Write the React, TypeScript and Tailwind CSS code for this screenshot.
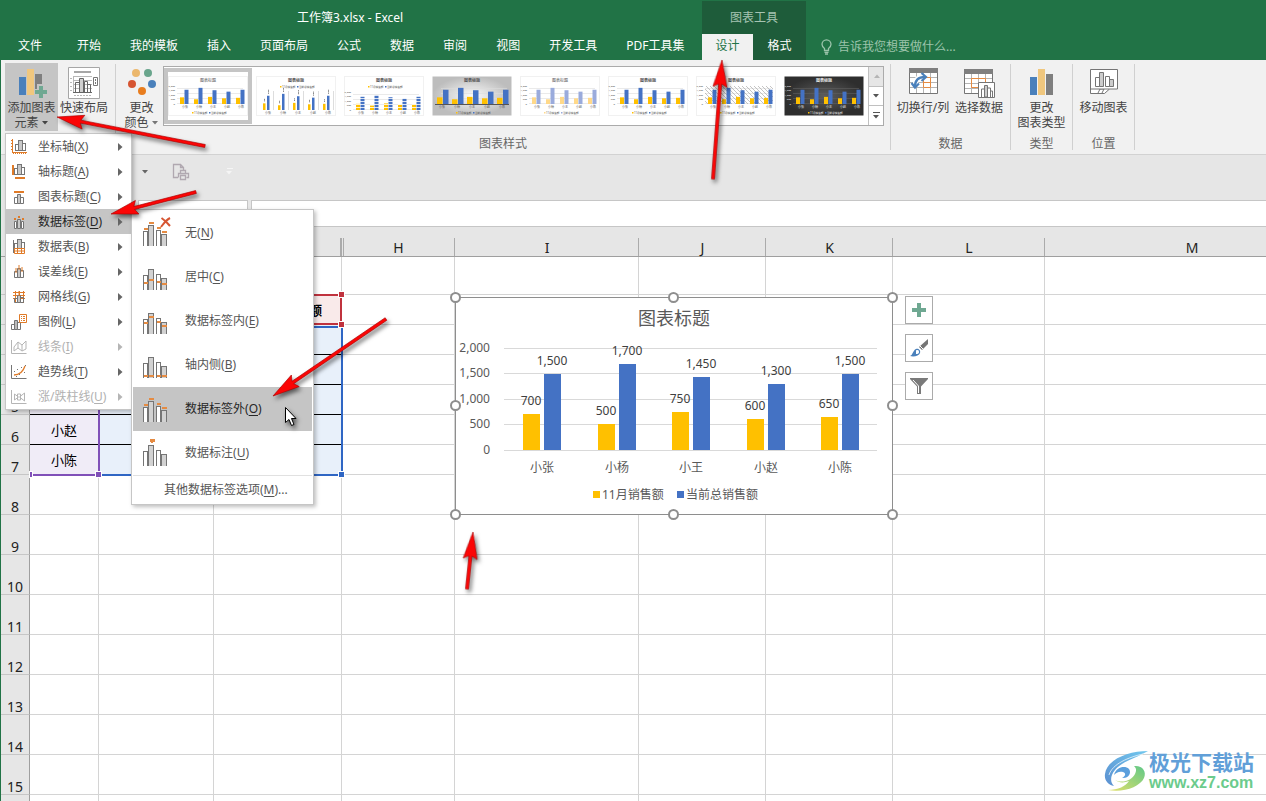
import React from 'react';
import { clsx } from 'clsx';

interface MenuEntry {
  label: string;
  hotkey: string;
  icon: React.ReactNode;
  disabled?: boolean;
  active?: boolean;
}

const TABS = ['开始', '我的模板', '插入', '页面布局', '公式', '数据', '审阅', '视图', '开发工具', 'PDF工具集'];

const SALES = [
  { name: '小张', nov: 700, total: 1500 },
  { name: '小杨', nov: 500, total: 1700 },
  { name: '小王', nov: 750, total: 1450 },
  { name: '小赵', nov: 600, total: 1300 },
  { name: '小陈', nov: 650, total: 1500 },
];

const ORANGE = '#e07b28';
const GRAY = '#757575';

/* ---------- Icons ---------- */

function Bars({ color = GRAY }: { color?: string }) {
  return (
    <g stroke={color} fill="#fff" shapeRendering="crispEdges">
      <path d="M4.5 13.5v-6h3v6z" />
      <path d="M11.5 13.5v-7h3v7z" />
      <path d="M7.5 13.5v-10h4v10z" fill="#c8c8c8" />
    </g>
  );
}

function SmallIcon({ children }: { children: React.ReactNode }) {
  return (
    <svg width="16" height="16" viewBox="0 0 16 16" fill="none" className="shrink-0">
      {children}
    </svg>
  );
}

const AxisIcon = (
  <SmallIcon>
    <g transform="translate(0 -2)"><Bars /></g>
    <path d="M1.5 0v14M0 1.500h1M0 4.500h1M0 7.500h1M0 10.500h1" stroke={ORANGE} />
    <path d="M1 13.500h15" stroke={ORANGE} />
    <path d="M2 14.500h14" stroke={ORANGE} strokeDasharray="1 1" />
  </SmallIcon>
);
const AxisTitleIcon = (
  <SmallIcon>
    <g transform="translate(-1 -3)"><Bars /></g>
    <path d="M1 1h2v10H1zM4 13h10v2H4z" fill={ORANGE} />
  </SmallIcon>
);
const TitleIcon = (
  <SmallIcon>
    <path d="M3.500 14.500v-6h3v6zM9.500 14.500v-6h3v6z" fill="#fff" stroke={GRAY} />
    <path d="M6.500 14.500v-9h3v9z" fill="#c8c8c8" stroke={GRAY} />
    <path d="M3 2h10v2H3z" fill={ORANGE} />
  </SmallIcon>
);
const LabelIcon = (
  <SmallIcon>
    <path d="M3.500 14.500v-7h2v7zM10.500 14.500v-7h2v7z" fill="#fff" stroke={GRAY} />
    <path d="M6.500 14.500v-9h3v9z" fill="#c8c8c8" stroke={GRAY} />
    <path d="M3 4h2v2H3zM7 2h2v2H7zM11 4h2v2h-2z" fill={ORANGE} />
  </SmallIcon>
);
const TableIcon = (
  <SmallIcon>
    <g transform="translate(-1 -3)"><Bars /></g>
    <path d="M3.500 9.500h10v5h-10zM3 12h11M6.500 9v6M10.500 9v6" stroke={ORANGE} fill="#fff" />
    <path d="M2.500 1v13" stroke={GRAY} />
  </SmallIcon>
);
const ErrorIcon = (
  <SmallIcon>
    <path d="M3.500 13.500v-6h3v6zM9.500 13.500v-7h3v7z" fill="#fff" stroke={GRAY} />
    <path d="M6.500 13.500v-9h3v9z" fill="#c8c8c8" stroke={GRAY} />
    <path d="M8 1v5M5 4v5M11 3v5" stroke={ORANGE} />
  </SmallIcon>
);
const GridIcon = (
  <SmallIcon>
    <path d="M2 3.500h12M2 6.500h12M2 9.500h12M4.500 2v12M8.500 2v12M12.500 2v12" stroke={ORANGE} />
    <path d="M3.500 13.500v-4h3v4zM9.500 13.500v-5h3v5z" stroke={GRAY} />
    <path d="M6.500 13.500v-7h3v7z" fill="#c8c8c8" stroke={GRAY} />
    <path d="M8 2v5" stroke={ORANGE} />
  </SmallIcon>
);
const LegendIcon = (
  <SmallIcon>
    <path d="M.5 15.5v-5h3v5zM6.5 15.5v-7h3v7z" fill="#fff" stroke={GRAY} />
    <path d="M3.5 15.5v-9h3v9z" fill="#bbb" stroke={GRAY} />
    <path d="M8.5.5h7v8h-7z" fill="#fff" stroke={ORANGE} />
    <path d="M10 2.5h1m1 0h2M10 4.5h1m1 0h2M10 6.5h1m1 0h2" stroke={ORANGE} />
  </SmallIcon>
);
const LinesIcon = (
  <SmallIcon>
    <path d="M.5 1v13.500h15" stroke="#b5b5b5" />
    <path d="M3 11V8l4-5 4 3 4-4v8l-4 2-4-3-4 3zM7 3v6M11 6v6" stroke="#b5b5b5" />
  </SmallIcon>
);
const TrendIcon = (
  <SmallIcon>
    <path d="M.5 1v13.500h15" stroke={GRAY} />
    <path d="M3 11c6 0 9-3 11-9" stroke={ORANGE} strokeWidth="1.300" />
    <path d="M3 7h1v1H3zM6 5h1v1H6zM8 10h1v1H8zM10 3h1v1h-1zM13 8h1v1h-1zM5 12h1v1H5zM14 1h1v1h-1z" fill={GRAY} />
  </SmallIcon>
);
const UpDownIcon = (
  <SmallIcon>
    <path d="M.5 1v13.500h15" stroke="#b5b5b5" />
    <path d="M3.500 5v6l4-3zM13.500 4v8l-5-4zM6.500 5h3v6h-3z" stroke="#b5b5b5" />
  </SmallIcon>
);

type LabelMode = 'none' | 'center' | 'inside' | 'base' | 'outside' | 'callout';

const ICON_BARS = [
  { x: 0.5, w: 4, top: 11.5, fill: '#fff' },
  { x: 5.5, w: 5, top: 5.5, fill: '#d2d2d2' },
  { x: 13.5, w: 4, top: 10.5, fill: '#fff' },
  { x: 18.5, w: 5, top: 14.5, fill: '#d2d2d2' },
];

function PositionIcon({ mode }: { mode: LabelMode }) {
  return (
    <svg width="28" height="32" viewBox="0 -3 28 32" fill="none" className="shrink-0" shapeRendering="crispEdges">
      {ICON_BARS.map((b) => {
        let y = b.top - 3.5;
        if (mode === 'center') y = (b.top + 26) / 2 - 1;
        if (mode === 'inside') y = b.top + 2;
        if (mode === 'base') y = 23;
        return (
          <g key={b.x}>
            <path d={`M${b.x} 26V${b.top}h${b.w}V26`} fill={b.fill} stroke={GRAY} />
            {mode !== 'callout' && (
              <rect x={b.x} y={Math.round(y)} width={b.w} height="2" fill="#e58b42" />
            )}
          </g>
        );
      })}
      {mode === 'callout' && <path d="M7-1h5v3h-2l-1 2-1-2H7z" fill="#e58b42" />}
      {mode === 'none' && (
        <path d="M18.500-2c3 2 6 5 8.500 8M27-2c-4 2-6 5-9 9" stroke="#d65532" strokeWidth="2" shapeRendering="auto" />
      )}
    </svg>
  );
}

function AddElementIcon() {
  return (
    <svg width="32" height="32" viewBox="0 0 32 32">
      <path d="M3 10h7v18H3z" fill="#4a80bb" />
      <path d="M11 2h7v26h-7z" fill="#f0c77e" />
      <path d="M19 7h7v21h-7z" fill="#7f7f7f" />
      <path d="M21 17h8v5h3v7h-3v3h-8v-3h-3v-7h3z" fill="#c5c5c5" />
      <path d="M23 19h4v4h4v4h-4v4h-4v-4h-4v-4h4z" fill="#6fa892" />
    </svg>
  );
}

function QuickLayoutIcon() {
  return (
    <svg width="32" height="32" viewBox="0 0 32 32" fill="none">
      <path d="M.5.500h31v31H.5z" fill="#fff" stroke="#a6a6a6" />
      <path d="M6 4h17v2H6z" fill="#a6a6a6" />
      <path d="M5 9.500h19M5 13.500h19M5 17.500h19M5 21.500h19M5.500 9v16M2 11.500h2M2 15.500h2M2 19.500h2M2 23.500h2" stroke="#b8b8b8" />
      <path d="M12 12h3v13h-3z" fill="#d0d0d0" />
      <path d="M7.500 25V15.500h4V25M11.500 25V11.500h4V25M16.500 25V14.500h3V25M19.500 25V17.500h3V25M5 25.500h19" stroke="#666" />
      <path d="M25.500 10.500h4v8h-4z" stroke="#777" />
      <path d="M27 12h1v2h-1zM27 15h1v2h-1z" fill="#777" />
      <path d="M6 28.500h18" stroke="#b8b8b8" strokeDasharray="2 1" />
    </svg>
  );
}

function ColorsIcon() {
  return (
    <svg width="32" height="32" viewBox="0 0 32 32">
      <circle cx="10" cy="6" r="4" fill="#ebb76c" />
      <circle cx="22" cy="6" r="4" fill="#69a58c" />
      <circle cx="6" cy="17" r="4" fill="#d65532" />
      <circle cx="26" cy="17" r="4" fill="#4a80bb" />
      <circle cx="16" cy="24" r="4" fill="#e87d1e" />
    </svg>
  );
}

function SwitchIcon() {
  return (
    <svg width="32" height="32" viewBox="0 0 32 32" fill="none">
      <path d="M2.500 3.500h28v23h-28z" fill="#fff" stroke={GRAY} />
      <path d="M2 1h29v5H2z" fill="#7f7f7f" />
      <path d="M3 10.500h27M3 15.500h27M3 20.500h27M9.500 6v20M16.500 6v20M23.500 6v20" stroke="#b4b4b4" />
      <path d="M16.500 10.500h7v10h-7zM17 15.500h6" stroke="#e58b42" fill="#fff" />
      <path d="M8 19c0-6 3-9 9-9" stroke="#fff" strokeWidth="5" />
      <path d="M8 20c0-7 3-10 10-10" stroke="#4a80bb" strokeWidth="2.500" />
      <path d="M14.500 6l4.500 4-4.500 4M4.500 16l3.500 4.500 4-4" stroke="#4a80bb" strokeWidth="2.200" />
    </svg>
  );
}

function SelectDataIcon() {
  return (
    <svg width="32" height="32" viewBox="0 0 32 32" fill="none">
      <path d="M1.500 3.500h28v23h-28z" fill="#fff" stroke={GRAY} />
      <path d="M1 2h29v5H1z" fill="#7f7f7f" />
      <path d="M2 11.500h27M2 16.500h27M2 21.500h27M8.500 7v19M15.500 7v19M22.500 7v19" stroke="#b4b4b4" />
      <path d="M8.500 11.500h14v9h-14z" stroke="#e58b42" />
      <path d="M15.500 15.500h16v15h-16z" fill="#fff" stroke={GRAY} />
      <path d="M18.500 30v-8h3v8M24.500 30v-9h3v9M27.500 30v-6h2v6" stroke={GRAY} />
      <path d="M21.500 30V18.500h3V30z" stroke={GRAY} fill="#ccc" />
    </svg>
  );
}

function ChangeTypeIcon() {
  return (
    <svg width="32" height="32" viewBox="0 0 32 32">
      <path d="M4 10h7v18H4z" fill="#4a80bb" />
      <path d="M12 2h7v26h-7z" fill="#f0c77e" />
      <path d="M20 7h7v21h-7z" fill="#7f7f7f" />
    </svg>
  );
}

function MoveChartIcon() {
  return (
    <svg width="32" height="32" viewBox="0 0 32 32" fill="none">
      <path d="M2.500 22v4.500h14l5-4.500" fill="#fff" stroke={GRAY} />
      <path d="M10 26l2-4h4l-2 4" stroke={GRAY} />
      <path d="M2.500 2.500h27v19.500h-27z" fill="#fff" stroke={GRAY} />
      <path d="M7.500 19.500v-9h4v9zM17.500 19.500v-10h4v10z" stroke={GRAY} />
      <path d="M11.500 19.500v-14h4v14zM21.500 19.500v-7h4v7z" fill="#ccc" stroke={GRAY} />
    </svg>
  );
}

function Caret({ className }: { className?: string }) {
  return (
    <svg width="7" height="4" viewBox="0 0 7 4" className={clsx('inline-block', className)}>
      <path d="M0 0h6L3 3.500z" fill="currentColor" />
    </svg>
  );
}

/* ---------- Ribbon ---------- */

type ThumbKind = 'plain' | 'labels' | 'stripes' | 'gradient' | 'soft' | 'bold' | 'hatch' | 'dark';

function ChartThumb({ kind }: { kind: ThumbKind }) {
  const legendTop = kind === 'labels' || kind === 'stripes';
  const yellow = kind === 'soft' ? '#ffd98a' : '#ffc000';
  const blue = kind === 'soft' ? '#9aabdc' : '#4472c4';
  const text = kind === 'dark' ? '#e8e8e8' : '#555';
  const thin = kind === 'labels';
  const base = legendTop ? 34 : 28;
  const scale = kind === 'stripes' ? 0.0088 : 0.0095;
  const grid = kind === 'dark' ? '#606060' : '#dcdcdc';
  return (
    <svg width="80" height="40" viewBox="0 0 80 40">
      <defs>
        <radialGradient id="thumb-light">
          <stop offset="0" stopColor="#fafafa" />
          <stop offset="1" stopColor="#bdbdbd" />
        </radialGradient>
        <radialGradient id="thumb-dark">
          <stop offset="0" stopColor="#5c5c5c" />
          <stop offset="1" stopColor="#2e2e2e" />
        </radialGradient>
        <pattern id="thumb-hatch" width="4" height="4" patternUnits="userSpaceOnUse">
          <path d="M0 0l4 4" stroke="#aaa" strokeWidth=".7" />
        </pattern>
      </defs>
      <rect
        x=".5"
        y=".5"
        width="79"
        height="39"
        fill={kind === 'gradient' ? 'url(#thumb-light)' : kind === 'dark' ? 'url(#thumb-dark)' : '#fff'}
        stroke={kind === 'dark' || kind === 'gradient' ? 'none' : '#f1f1f1'}
      />
      {!thin && [0, 5, 10, 15].map((d) => (
        <path key={d} d={`M9 ${base - d - 0.5}h66`} stroke={grid} strokeWidth=".6" />
      ))}
      {kind === 'gradient' && <path d="M3 28.500h74" stroke="#555" />}
      {kind === 'hatch' && <rect x="9" y="10" width="68" height="18" fill="url(#thumb-hatch)" />}
      {!thin && kind !== 'gradient' && ['0', '500', '1,000', '1,500', '2,000'].map((t, i) => (
        <text key={t} x="7" y={base - i * 4.5 + 0.5} fontSize="2.500" textAnchor="end" fill={text}>{t}</text>
      ))}
      {SALES.map((s, i) => {
        const x = thin ? 7 + i * 15 : kind === 'gradient' ? 5 + i * 15 : 12 + i * 14;
        const w = thin ? 2.5 : kind === 'gradient' ? 5.5 : 4;
        const novH = s.nov * scale;
        const totalH = s.total * scale;
        return (
          <g key={s.name}>
            {thin && <path d={`M${x + 10.5} 15v19`} stroke="#ddd" />}
            <rect x={x} y={base - novH} width={w} height={novH} fill={yellow} />
            <rect x={x + (thin ? 4 : kind === 'gradient' ? 6 : 4.5)} y={base - totalH} width={w} height={totalH} fill={blue} />
            {kind === 'stripes' && [2, 5, 8, 11, 14].map((d) => (
              <path key={d} d={`M${x} ${base - d - 0.5}h9`} stroke="#fff" strokeWidth=".8" />
            ))}
            {thin && (
              <g stroke="#777" strokeDasharray="1 .5">
                <path d={`M${x + 1.5} ${base - novH - 2}v-3M${x + 5.5} ${base - totalH - 2}v-4`} />
              </g>
            )}
            <text x={x + 5} y={base + 4} fontSize="3" textAnchor="middle" fill={text}>{s.name}</text>
          </g>
        );
      })}
      <text x="40" y="6" fontSize="4" fontWeight={kind === 'plain' || kind === 'soft' ? 400 : 700} textAnchor="middle" fill={text}>图表标题</text>
      <g fontSize="2.600" fill={text}>
        <rect x="24" y={legendTop ? 10 : 36} width="1.500" height="1.500" fill={yellow} />
        <text x="26" y={legendTop ? 12 : 38}>11月销售额</text>
        <rect x="41" y={legendTop ? 10 : 36} width="1.500" height="1.500" fill={blue} />
        <text x="43" y={legendTop ? 12 : 38}>当前总销售额</text>
      </g>
    </svg>
  );
}

const THUMBS: ThumbKind[] = ['plain', 'labels', 'stripes', 'gradient', 'soft', 'bold', 'hatch', 'dark'];

interface RibbonButtonProps {
  icon: React.ReactNode;
  children: React.ReactNode;
  className: string;
}

function RibbonButton({ icon, children, className }: RibbonButtonProps) {
  return (
    <button className={clsx('flex h-[68px] flex-col items-center gap-px whitespace-nowrap pt-1 text-xs leading-[15px] text-[#444]', className)}>
      {icon}
      <span className="block text-center">{children}</span>
    </button>
  );
}

function RibbonGroup({ label, children }: { label: string; children: React.ReactNode }) {
  return (
    <div className="flex shrink-0">
      <div className="flex flex-col pt-[3px]">
        <div className="flex h-[74px]">{children}</div>
        <div className="text-center text-xs leading-[14px] text-[#666]">{label}</div>
      </div>
      <div className="mt-1 h-[86px] w-px bg-[#d0d0d0]" />
    </div>
  );
}

function Ribbon() {
  return (
    <div className="flex h-[95px] shrink-0 border-b border-[#d2d2d2] bg-[#f1f1f1]">
      <div className="relative z-20">
        <RibbonGroup label="">
          <RibbonButton className="ml-1 w-[53px] bg-[#c5c5c5]" icon={<AddElementIcon />}>
            添加图表<br />元素 <Caret className="mb-0.5" />
          </RibbonButton>
          <RibbonButton className="mr-[5px] w-[52px]" icon={<QuickLayoutIcon />}>快速布局</RibbonButton>
        </RibbonGroup>
        <ElementMenu />
      </div>

      <RibbonGroup label="图表样式">
        <RibbonButton className="ml-1 w-[43px]" icon={<ColorsIcon />}>
          更改<br />颜色 <Caret className="mb-0.5 text-[#777]" />
        </RibbonButton>
        <div className="mr-1.5 mt-[3px] flex h-[60px] border border-[#ababab] bg-white">
          {THUMBS.map((kind, i) => (
            <button
              key={kind}
              aria-label={`样式 ${i + 1}`}
              className={clsx('my-px flex w-[88px] items-center justify-center border-4', i === 0 ? 'border-[#c5c5c5]' : 'border-transparent')}
            >
              <ChartThumb kind={kind} />
            </button>
          ))}
          <div className="flex w-[15px] flex-col border-l border-[#c0c0c0] text-[#555]">
            <button aria-label="上一行" className="flex flex-1 items-center justify-center bg-[#e6e6e6] text-[#b5b5b5]">
              <Caret className="rotate-180" />
            </button>
            <button aria-label="下一行" className="flex flex-1 items-center justify-center border-y border-[#c0c0c0]">
              <Caret />
            </button>
            <button aria-label="其他" className="flex flex-1 flex-col items-center justify-center gap-0.5">
              <span className="h-px w-[7px] bg-[#555]" />
              <Caret />
            </button>
          </div>
        </div>
      </RibbonGroup>

      <RibbonGroup label="数据">
        <RibbonButton className="ml-1 w-14" icon={<SwitchIcon />}>切换行/列</RibbonButton>
        <RibbonButton className="mr-[3px] w-14" icon={<SelectDataIcon />}>选择数据</RibbonButton>
      </RibbonGroup>
      <RibbonGroup label="类型">
        <RibbonButton className="w-[61px]" icon={<ChangeTypeIcon />}>更改<br />图表类型</RibbonButton>
      </RibbonGroup>
      <RibbonGroup label="位置">
        <RibbonButton className="w-[61px]" icon={<MoveChartIcon />}>移动图表</RibbonButton>
      </RibbonGroup>
    </div>
  );
}

/* ---------- Menus ---------- */

const ELEMENTS: MenuEntry[] = [
  { label: '坐标轴', hotkey: 'X', icon: AxisIcon },
  { label: '轴标题', hotkey: 'A', icon: AxisTitleIcon },
  { label: '图表标题', hotkey: 'C', icon: TitleIcon },
  { label: '数据标签', hotkey: 'D', icon: LabelIcon, active: true },
  { label: '数据表', hotkey: 'B', icon: TableIcon },
  { label: '误差线', hotkey: 'E', icon: ErrorIcon },
  { label: '网格线', hotkey: 'G', icon: GridIcon },
  { label: '图例', hotkey: 'L', icon: LegendIcon },
  { label: '线条', hotkey: 'I', icon: LinesIcon, disabled: true },
  { label: '趋势线', hotkey: 'T', icon: TrendIcon },
  { label: '涨/跌柱线', hotkey: 'U', icon: UpDownIcon, disabled: true },
];

const POSITIONS: MenuEntry[] = [
  { label: '无', hotkey: 'N', icon: <PositionIcon mode="none" /> },
  { label: '居中', hotkey: 'C', icon: <PositionIcon mode="center" /> },
  { label: '数据标签内', hotkey: 'E', icon: <PositionIcon mode="inside" /> },
  { label: '轴内侧', hotkey: 'B', icon: <PositionIcon mode="base" /> },
  { label: '数据标签外', hotkey: 'O', icon: <PositionIcon mode="outside" />, active: true },
  { label: '数据标注', hotkey: 'U', icon: <PositionIcon mode="callout" /> },
];

function Hotkey({ entry }: { entry: Pick<MenuEntry, 'label' | 'hotkey'> }) {
  return (
    <span>
      {entry.label}(<span className="underline underline-offset-2">{entry.hotkey}</span>)
    </span>
  );
}

function ElementMenu() {
  return (
    <div className="absolute left-1 top-[73px] w-[127px] border border-[#c6c6c6] bg-white shadow-[2px_2px_4px_rgba(0,0,0,0.25)]">
      {ELEMENTS.map((e) => (
        <button
          key={e.label}
          disabled={e.disabled}
          className={clsx(
            'flex h-[25px] w-full items-center gap-[11px] pl-[5px] text-xs',
            e.active ? 'bg-[#c5c5c5] text-[#262626]' : e.disabled ? 'text-[#b1b1b1]' : 'text-[#555]',
          )}
        >
          {e.icon}
          <Hotkey entry={e} />
          <svg width="5" height="8" viewBox="0 0 5 8" className="ml-auto mr-2 shrink-0">
            <path d="M0 0v8l4.500-4z" fill={e.disabled ? '#b5b5b5' : '#666'} />
          </svg>
        </button>
      ))}
      <PositionMenu />
    </div>
  );
}

function PositionMenu() {
  return (
    <div className="absolute left-[125px] top-[75px] w-[183px] border border-[#c6c6c6] bg-white p-px shadow-[2px_2px_4px_rgba(0,0,0,0.25)]">
      {POSITIONS.map((p) => (
        <button
          key={p.label}
          className={clsx(
            'flex h-11 w-full items-center gap-3.5 pl-2.5 text-xs',
            p.active ? 'bg-[#c5c5c5] text-[#262626]' : 'text-[#555]',
          )}
        >
          {p.icon}
          <Hotkey entry={p} />
        </button>
      ))}
      <button className="flex h-7 w-full items-center border-t border-[#e1e1e1] pl-[31px] text-xs text-[#555]">
        其他数据标签选项(<span className="underline underline-offset-2">M</span>)...
      </button>
    </div>
  );
}

/* ---------- Header ---------- */

function Header() {
  return (
    <header className="flex h-[60px] shrink-0 bg-[#217346] text-xs text-white">
      <div className="flex w-[701px] shrink-0 flex-col">
        <div className="flex h-[34px] items-center pl-[296px] pt-0.5">工作簿3.xlsx - Excel</div>
        <nav className="flex flex-1 items-center gap-[29px] whitespace-nowrap pb-0.5 pl-[17px]">
          <button className="mr-1.5">文件</button>
          {TABS.map((t) => (
            <button key={t}>{t}</button>
          ))}
        </nav>
      </div>
      <div className="mt-px flex w-[104px] shrink-0 flex-col bg-[#1e5c3a]">
        <div className="flex h-[33px] items-center justify-center text-[#a6c4b2]">图表工具</div>
        <div className="flex flex-1">
          <button className="w-[51px] bg-[#f1f1f1] pb-0.5 text-[#217346]">设计</button>
          <button className="flex-1 pb-0.5">格式</button>
        </div>
      </div>
      <div className="flex items-end gap-1.5 pb-[3px] pl-[15px] text-[#9cc4ab]">
        <svg width="11" height="16" viewBox="0 0 11 16" fill="none" stroke="currentColor" strokeWidth="1.300" className="mb-0.5">
          <path d="M3.500 11.500V9.500C2 8.500 1 7 1 5.300a4.500 4.500 0 0 1 9 0c0 1.700-1 3.200-2.500 4.200v2zM3.500 13.300h4M4 15h3" />
        </svg>
        <span className="leading-5">告诉我您想要做什么...</span>
      </div>
    </header>
  );
}

function Toolbars() {
  return (
    <div className="shrink-0 bg-[#e6e6e6]">
      <div className="flex h-[45px] items-center pb-3 pl-[141px] text-[#666]">
        <Caret />
        <svg width="18" height="18" viewBox="0 0 18 18" fill="none" stroke="#b0a8b0" className="ml-[23px]">
          <path d="M6 14.500H1.500V1.500h7l3 3V7M8.500 1.500v3h3" strokeWidth="1.300" />
          <path d="M8.500 10V7.500h5V10M6.500 14.500v-4h10v4h-2M8.500 12.500h5v4h-5z" strokeWidth="1.300" />
        </svg>
        <div className="ml-9 flex flex-col items-center gap-0.5 text-[#f5f5f5]">
          <span className="h-px w-1.5 bg-[#f5f5f5]" />
          <Caret />
        </div>
      </div>
      <div className="flex h-7 gap-[3px] pb-px pl-[137px]">
        <input aria-label="名称框" className="w-[110px] border border-[#c6c6c6] bg-white px-2 text-xs outline-none" />
        <input aria-label="编辑栏" className="min-w-0 flex-1 border border-r-0 border-[#c6c6c6] bg-white px-2 text-xs outline-none" />
      </div>
    </div>
  );
}

/* ---------- Sheet ---------- */

const COLUMNS = ['', '', '', 'H', 'I', 'J', 'K', 'L', 'M'];

// text of the used cells, by row, from the first column on
const CELLS: Record<number, string[]> = {
  2: ['', '', '当前总销售额'],
  6: ['小赵'],
  7: ['小陈'],
};

function rowHeight(row: number) {
  if (row === 1) return 'h-[38px]';
  return row <= 7 ? 'h-[30px]' : 'h-10';
}

function cellClass(row: number, col: number) {
  const inData = row >= 3 && row <= 7 && col < 3;
  return clsx(
    'border-b border-r p-0 text-center',
    inData && row < 7 ? 'border-b-black border-r-[#d4d4d4]' : 'border-[#d4d4d4]',
    inData && (col === 0 ? 'bg-[#f0ecf7]' : 'bg-[#e8f0fa]'),
    row === 2 && (col === 1 || col === 2) && 'bg-[#f9eaea]',
    row === 2 && col === 2 && 'pr-[19px] text-right font-bold',
  );
}

function Grid() {
  return (
    <table className="w-[1338px] table-fixed border-separate border-spacing-0 text-[13px] leading-4 text-black">
      <colgroup>
        <col className="w-[29px]" />
        <col className="w-[69px]" />
        <col className="w-[115px]" />
        <col className="w-32" />
        <col className="w-[113px]" />
        <col className="w-[184px]" />
        <col className="w-[127px]" />
        <col className="w-[127px]" />
        <col className="w-[152px]" />
        <col className="w-[294px]" />
      </colgroup>
      <thead>
        <tr className="h-[29px] bg-[#e6e6e6] text-sm">
          <th className="border-b border-[#9f9f9f] p-0" />
          {COLUMNS.map((c, i) => (
            <th
              key={i}
              scope="col"
              className="border-b border-[#9f9f9f] bg-[linear-gradient(#ababab,#ababab)] bg-[length:1px_18px] bg-[position:100%_100%] bg-no-repeat p-0 align-bottom font-normal leading-4 text-[#222]"
            >
              {c}
            </th>
          ))}
        </tr>
      </thead>
      <tbody>
        {Array.from({ length: 15 }, (_, i) => i + 1).map((row) => (
          <tr key={row} className={rowHeight(row)}>
            <th scope="row" className="border-b border-r border-b-[#c6c6c6] border-r-[#9f9f9f] bg-[#e6e6e6] p-0 align-bottom text-sm font-normal leading-[15px] text-[#222]">
              {row}
            </th>
            {COLUMNS.map((_, col) => (
              <td key={col} className={cellClass(row, col)}>{CELLS[row]?.[col]}</td>
            ))}
          </tr>
        ))}
        <tr className="h-10">
          <th className="border-r border-[#9f9f9f] bg-[#e6e6e6]" />
          {COLUMNS.map((_, col) => (
            <td key={col} className="border-r border-[#d4d4d4]" />
          ))}
        </tr>
      </tbody>
    </table>
  );
}

// Coloured frames around the ranges that feed the chart
function RangeFrames() {
  return (
    <svg width="350" height="260" className="pointer-events-none absolute left-0 top-0" shapeRendering="crispEdges" fill="none">
      <path d="M98 67h242v29H98z" stroke="#c0323e" strokeWidth="2" />
      <path d="M98 99h243v148H98" stroke="#2f66c4" strokeWidth="2" />
      <path d="M98 99v148H30" stroke="#8050b8" strokeWidth="2" />
      <path d="M337.500 63.500h6v6h-6zM337.500 93.500h6v6h-6z" fill="#c0323e" stroke="#fff" />
      <path d="M337.500 243.500h6v6h-6z" fill="#2f66c4" stroke="#fff" />
      <path d="M94.500 243.500h6v6h-6zM28.500 243.500h3v6h-3z" fill="#8050b8" stroke="#fff" />
      <path d="M339.500 10v18" stroke="#ababab" />
      <path d="M342.500 10v18" stroke="#ababab" />
    </svg>
  );
}

const PLOT_BOTTOM = 450;
const UNIT = 0.0512;

function Chart() {
  return (
    <svg
      width="452"
      height="232"
      viewBox="448 290 452 232"
      className="block text-xs"
      role="img"
      aria-label="图表标题"
    >
      <path d="M455.500 297.500h437v217h-437z" fill="#fff" stroke="#8e8e8e" />
      <text x="674" y="325" fontSize="18" textAnchor="middle" fill="#595959">图表标题</text>
      {[0, 500, 1000, 1500, 2000].map((v) => {
        const y = Math.round(PLOT_BOTTOM - v * UNIT);
        return (
          <g key={v}>
            <path d={`M504 ${y + 0.5}h373`} stroke="#d9d9d9" />
            <text x="490" y={y + 4} textAnchor="end" fill="#595959">{v.toLocaleString('en-US')}</text>
          </g>
        );
      })}
      {SALES.map((s, i) => {
        const x = Math.round(523 + i * 74.5);
        const novTop = Math.round(PLOT_BOTTOM - s.nov * UNIT);
        const totalTop = Math.round(PLOT_BOTTOM - s.total * UNIT) + 1;
        return (
          <g key={s.name} textAnchor="middle">
            <rect x={x} y={novTop} width="17" height={PLOT_BOTTOM - novTop} fill="#ffc000" />
            <rect x={x + 21} y={totalTop} width="17" height={PLOT_BOTTOM - totalTop} fill="#4472c4" />
            <text x={x + 8} y={novTop - 9} fill="#404040">{s.nov}</text>
            <text x={x + 29} y={totalTop - 9} fill="#404040">{s.total.toLocaleString('en-US')}</text>
            <text x={x + 19} y="472" fill="#595959">{s.name}</text>
          </g>
        );
      })}
      <path d="M593 491h7v7h-7z" fill="#ffc000" />
      <text x="602" y="499" fill="#595959">11月销售额</text>
      <path d="M677 491h7v7h-7z" fill="#4472c4" />
      <text x="686" y="499" fill="#595959">当前总销售额</text>
      {[[455.5, 297.5], [673.5, 297.5], [892.5, 297.5], [455.5, 405.5], [892.5, 405.5], [455.5, 514.5], [673.5, 514.5], [892.5, 514.5]].map(([cx, cy]) => (
        <circle key={`${cx}-${cy}`} cx={cx} cy={cy} r="4.500" fill="#fff" stroke="#8e8e8e" strokeWidth="2" />
      ))}
    </svg>
  );
}

function ChartTools() {
  const box = 'flex size-7 items-center justify-center border border-[#ababab] bg-white';
  return (
    <div className="flex flex-col gap-2.5 pt-1.5">
      <button aria-label="图表元素" className={box}>
        <svg width="16" height="16" viewBox="0 0 16 16">
          <path d="M6 1h4v5h5v4h-5v5H6v-5H1V6h5z" fill="#6fa892" />
        </svg>
      </button>
      <button aria-label="图表样式" className={box}>
        <svg width="20" height="20" viewBox="0 0 20 20">
          <path d="M19 1v5l-6 6-3-3z" fill="#757575" />
          <path d="M11 8l3 3" stroke="#fff" />
          <path d="M1 18c3-1 3-6 6-7 2-1 5 1 4 4-1 3-6 4-10 3z" fill="#4a80bb" />
          <path d="M7 12.500c2-1 3 0 3 1.500s-1 2-3 2z" fill="#fff" />
        </svg>
      </button>
      <button aria-label="图表筛选器" className={box}>
        <svg width="20" height="20" viewBox="0 0 20 20">
          <path d="M1 2h18v1l-7 7.500V18H8v-7.500L1 3z" fill="#7a7a7a" />
          <path d="M4 4l5.500 6v7" stroke="#fff" fill="none" />
        </svg>
      </button>
    </div>
  );
}

/* ---------- Annotations ---------- */

const ARROWS = [
  { tip: [56, 117], tail: [204, 146] },
  { tip: [110, 214], tail: [195, 192] },
  { tip: [272, 396], tail: [385, 319] },
  { tip: [721, 60], tail: [712, 179] },
  { tip: [472, 532], tail: [466, 589] },
];

function Arrows() {
  return (
    <svg className="pointer-events-none absolute inset-0 z-30 h-full w-full">
      <g className="drop-shadow-[2px_3px_2px_rgba(0,0,0,0.55)]">
        {ARROWS.map(({ tip, tail }) => {
          const len = Math.hypot(tip[0] - tail[0], tip[1] - tail[1]);
          const angle = (Math.atan2(tail[1] - tip[1], tail[0] - tip[0]) * 180) / Math.PI;
          return (
            <path
              key={tip.join()}
              transform={`translate(${tip[0]} ${tip[1]}) rotate(${angle})`}
              d={`M0 0L27-7L24-1.500H${len}V1.500H24L27 7z`}
              fill="#fb0505"
              stroke="#a00"
              strokeWidth=".6"
              strokeLinejoin="round"
            />
          );
        })}
        <path d="M284.500 407.500v15l3.500-3 2.500 6 2.500-1-2.500-6h4.500z" fill="#fff" stroke="#000" />
      </g>
    </svg>
  );
}

function Watermark() {
  return (
    <div className="absolute bottom-2 right-3 z-10 flex items-center">
      <svg width="46" height="44" viewBox="0 0 46 44">
        <defs>
          <linearGradient id="swirl-blue" x1="0" x2="1" y1="1" y2="0">
            <stop offset="0" stopColor="#5b8fd0" />
            <stop offset="1" stopColor="#72c8ee" />
          </linearGradient>
          <linearGradient id="swirl-green" x1="0" x2="1" y1="1" y2="0">
            <stop offset="0" stopColor="#e3e06a" />
            <stop offset="1" stopColor="#5fc888" />
          </linearGradient>
        </defs>
        <path d="M45 2C26 2 4 10 2 25c-1 6 3 11 9 12-4-4-4-10 1-16C18 13 33 9 45 2z" fill="url(#swirl-blue)" />
        <path d="M40 5C26 8 9 15 6 26" stroke="#fff" strokeWidth="1" fill="none" opacity=".7" />
        <path d="M11 26c2-8 11-10 15-6 3 4-1 10-7 9 4-2 4-5 1-6-4-1-7 1-9 3z" fill="#5b9fdc" />
        <path d="M12 31c8 4 17 0 20-6 2-4 1-6-1-8 8-1 13 5 10 12C37 38 20 44 5 41c10 0 18-4 21-9-5 2-10 2-14-1z" fill="url(#swirl-green)" />
      </svg>
      <div className="whitespace-nowrap font-bold">
        <div className="text-[21px] leading-6 text-[#619fd8]">极光下载站</div>
        <div className="font-['Liberation_Sans',sans-serif] text-base leading-[18px] text-[#6bcb8c]">www.xz7.com</div>
      </div>
    </div>
  );
}

export default function App() {
  return (
    <div className="relative flex h-screen flex-col overflow-hidden border-l border-[#217346] bg-white font-['Noto_Sans','Noto_Sans_CJK_SC',sans-serif]">
      <Header />
      <Ribbon />
      <Toolbars />
      <main className="relative min-h-0 flex-1 overflow-hidden">
        <Grid />
        <RangeFrames />
        <div className="absolute left-[447px] top-[62px] flex gap-[5px]">
          <Chart />
          <ChartTools />
        </div>
      </main>
      <Arrows />
      <Watermark />
    </div>
  );
}
